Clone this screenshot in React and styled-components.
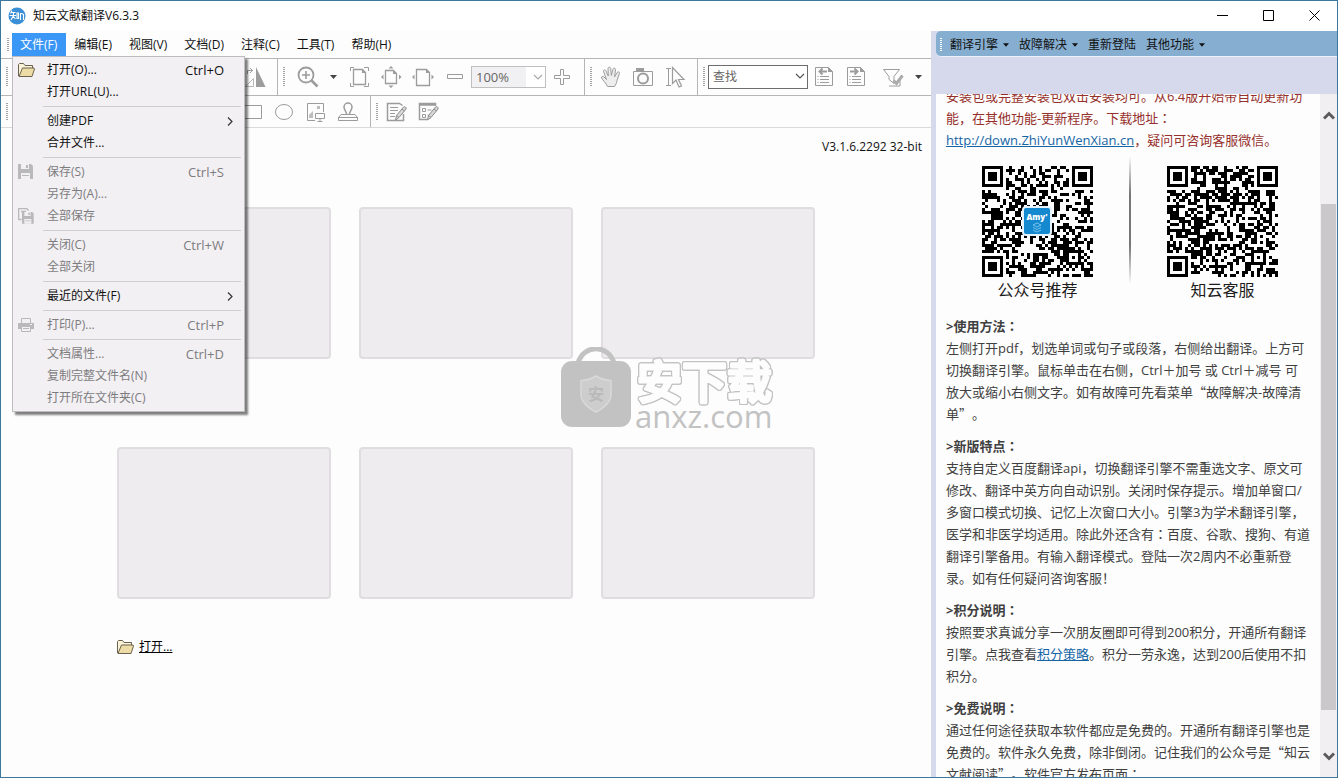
/* eslint-disable react/prop-types */
import { Fragment } from 'react';
import styled, { createGlobalStyle, css } from 'styled-components';

const GlobalStyles = createGlobalStyle`
  * {
    box-sizing: border-box;
    margin: 0;
    padding: 0;
  }

  body {
    font-family: 'Open Sans', 'Noto Sans CJK SC', sans-serif;
    font-size: 12px;
    line-height: 16px;
    color: #111;
    background: #fff;
    overflow: hidden;
  }

  button,
  select {
    font: inherit;
    color: inherit;
    border: none;
    background: none;
  }
`;

/* ---------- window ---------- */

const Window = styled.div`
  display: flex;
  flex-direction: column;
  height: 100vh;
  overflow: hidden;
  border: 1px solid #3b789c;
  background: #fdfdfd;
`;

const TitleBar = styled.header`
  display: flex;
  align-items: center;
  height: 30px;
  padding-left: 7px;
  background: #fff;
`;

const Title = styled.h1`
  flex: 1;
  margin-left: 7px;
  font-size: 12px;
  font-weight: 400;
`;

const WindowButton = styled.button`
  display: grid;
  place-items: center;
  width: 46px;
  height: 30px;
  padding-bottom: 1px;
`;

const Body = styled.div`
  display: flex;
  flex: 1;
  min-height: 0;
`;

const Reader = styled.main`
  position: relative;
  flex: 1;
  min-width: 0;
`;

/* ---------- menu bar ---------- */

const Grip = styled.span`
  flex: none;
  width: 2px;
  height: ${({ $height = 20 }) => $height}px;
  background: repeating-linear-gradient(
    ${({ $color = '#a3a3a3' }) => $color} 0 1px,
    transparent 1px 2px
  );
`;

const MenuBar = styled.nav`
  display: flex;
  align-items: center;
  height: 28px;
  padding-left: 6px;
  border-bottom: 1px solid #b5b5b5;
`;

const MenuTitle = styled.button`
  height: 24px;
  padding: 0 9px 0 8px;
  white-space: nowrap;

  &:first-of-type {
    margin-left: 3px;
  }

  ${({ $open }) =>
    $open &&
    css`
      color: #fff;
      background: #3b97f5;
    `}
`;

const Dropdown = styled.div`
  position: absolute;
  z-index: 2;
  top: 25px;
  left: 11px;
  width: 233px;
  padding: 2px 3px 2px 0;
  border: 1px solid #bdbcbf;
  background: #f2f0f3;
  box-shadow: 3px 3px 2px rgba(0, 0, 0, 0.5);
`;

const MenuItem = styled.button`
  display: flex;
  align-items: center;
  width: 100%;
  height: 22px;
  padding-right: 17px;
  text-align: left;

  &:disabled {
    color: #7d7c7e;
  }
`;

const MenuIcon = styled.span`
  display: grid;
  place-items: center;
  width: 26px;
  margin-right: 8px;
`;

const MenuLabel = styled.span`
  flex: 1;
`;

const Shortcut = styled.span`
  font-size: 13px;
`;

const MenuArrow = styled.svg`
  margin-right: -9px;
`;

const MenuRule = styled.hr`
  height: 1px;
  margin: 3px 0 3px 30px;
  border: none;
  background: #cfcdd0;
`;

/* ---------- toolbars ---------- */

const ToolBar = styled.div`
  display: flex;
  height: ${({ $height }) => $height}px;
  border-bottom: 1px solid ${({ $line = '#b5b5b5' }) => $line};
`;

const ToolGroup = styled.div`
  display: flex;
  flex: none;
  align-items: center;
  min-width: ${({ $min = 0 }) => $min}px;
  padding-left: 5px;
  padding-right: ${({ $last }) => ($last ? 0 : 6)}px;
  border-right: ${({ $last }) => ($last ? 'none' : '1px solid #b5b5b5')};
`;

const Tools = styled.div`
  display: flex;
  flex: 1;
  align-items: center;
  justify-content: ${({ $end }) => ($end ? 'flex-end' : 'flex-start')};
  margin-left: ${({ $gap = 3 }) => $gap}px;
`;

const ToolButton = styled.button`
  display: grid;
  place-items: center;
  width: ${({ $narrow }) => ($narrow ? 19 : 32)}px;
  height: 24px;
`;

const Spacer = styled.span`
  width: 5px;
`;

const SelectBox = styled.label`
  position: relative;
  display: block;

  svg {
    position: absolute;
    top: 8px;
    right: 3px;
    pointer-events: none;
  }
`;

const Select = styled.select`
  display: block;
  width: ${({ $strong }) => ($strong ? 100 : 75)}px;
  height: ${({ $strong }) => ($strong ? 24 : 22)}px;
  padding-left: 4px;
  appearance: none;
  border-radius: 0;
  color: #666;
  font-size: ${({ $strong }) => ($strong ? 12 : 13)}px;
  border: 1px solid ${({ $strong }) => ($strong ? '#6d6d6d' : '#bfbfbf')};
  background: ${({ $strong }) =>
    $strong ? '#fff' : 'linear-gradient(to right, #f1f0f2 54px, #fff 54px)'};
`;

const Icon = styled.svg`
  display: block;
  width: 22px;
  height: 22px;
  fill: none;
  stroke: #9c9c9c;
`;

/* ---------- start page ---------- */

const StartPage = styled.section`
  display: flex;
  flex-direction: column;
  align-items: center;
`;

const Version = styled.p`
  align-self: flex-end;
  padding: 11px 9px 0 0;
  margin-bottom: 52px;
`;

const RecentFiles = styled.div`
  display: grid;
  grid-template-columns: repeat(3, 214px);
  grid-auto-rows: 152px;
  gap: 88px 28px;
`;

const RecentFile = styled.div`
  border: 2px solid #dfdde0;
  border-radius: 4px;
  background: #eeecef;
`;

const OpenRow = styled.div`
  display: flex;
  align-items: center;
  gap: 5px;
  width: 698px;
  margin-top: 40px;
`;

const OpenLink = styled.a`
  color: #000;
`;

const Watermark = styled.div`
  position: absolute;
  z-index: 1;
  top: 316px;
  left: 559px;
  display: flex;
  gap: 3px;
  pointer-events: none;
`;

const WatermarkText = styled.div`
  padding-top: 9px;
  color: #c2c2c2;
  font-size: 31px;
  font-weight: 500;
  line-height: 24px;
`;

const WatermarkName = styled.svg`
  display: block;
  filter: drop-shadow(1px 0 #c2c2c2) drop-shadow(-1px 0 #c2c2c2)
    drop-shadow(0 1px #c2c2c2) drop-shadow(0 -1px #c2c2c2);
`;

/* ---------- translation panel ---------- */

const Panel = styled.aside`
  display: flex;
  flex: none;
  flex-direction: column;
  width: 406px;
  padding-left: 5px;
  background: #d6d9ec;
`;

const PanelBar = styled.nav`
  display: flex;
  flex: none;
  align-items: center;
  height: 26px;
  margin-bottom: 37px;
  padding: 3px 0 0 4px;
  border-bottom: 1px solid #e9f1fa;
  border-radius: 5px 0 0 5px;
  background: #86aed0;
`;

const PanelButtons = styled.div`
  display: flex;
  margin-left: 3px;
`;

const PanelButton = styled.button`
  display: flex;
  align-items: center;
  gap: 5px;
  height: 22px;
  padding: 0 5px;
`;

const PanelBody = styled.div`
  display: flex;
  flex: 1;
  min-height: 0;
  background: #fdfdfd;
`;

const Scroller = styled.div`
  flex: 1;
  overflow: hidden;
`;

const Article = styled.article`
  margin-top: -9px;
  padding: 0 9px 0 10px;
  color: #404040;
  font-size: 13px;
  line-height: 22px;
  text-spacing-trim: space-all;

  a {
    color: #1565a5;
  }
`;

const Notice = styled.p`
  color: #96302c;
`;

const Heading = styled.h2`
  margin-top: 10px;
  font-size: 13px;
  font-weight: 700;
`;

// full-width quotation marks
const Quote = styled.span`
  font-family: 'Noto Sans CJK SC', sans-serif;
`;

// colon that sits in the middle of its cell
const Colon = styled.span`
  font-family: 'Noto Sans CJK JP', sans-serif;
`;

const Codes = styled.div`
  display: flex;
  gap: 36px;
  height: 154px;
  padding-left: 36px;
`;

const Code = styled.figure`
  padding-top: 15px;

  svg {
    display: block;
  }
`;

const CodeCaption = styled.figcaption`
  width: 111px;
  font-size: 16px;
  line-height: 26px;
  text-align: center;
  color: #1c1c1c;
`;

const CodeDivider = styled.div`
  width: 2px;
  height: 128px;
  margin-top: 5px;
  background: linear-gradient(transparent, #777 30%, #777 70%, transparent);
`;

const ScrollBar = styled.div`
  display: flex;
  flex-direction: column;
  width: 17px;
  background: #f1eff2;
`;

const ScrollButton = styled.button`
  display: grid;
  place-items: center;
  height: 42px;
`;

const Track = styled.div`
  display: flex;
  flex: 1;
  flex-direction: column;
  padding: 0 1px;
`;

const TrackGap = styled.div`
  flex: ${({ $grow }) => $grow};
`;

const Thumb = styled.div`
  flex: 506;
  background: #cbc8cc;
`;

/* ---------- icons ---------- */

const Caret = ({ size = 7, color = '#444' }) => (
  <svg width={size} height="4" viewBox="0 0 7 4" aria-hidden="true">
    <path d="M0 0h7L3.5 4z" fill={color} />
  </svg>
);

const Chevron = ({ color = '#555' }) => (
  <svg width="10" height="7" viewBox="0 0 10 7" fill="none" aria-hidden="true">
    <path d="M1 1l4 4 4-4" stroke={color} strokeWidth="1.2" />
  </svg>
);

const FolderIcon = () => (
  <svg width="17" height="14" viewBox="0 0 17 14" aria-hidden="true">
    <path
      d="M.5 13V1.5l1-1h4l1.500 2h7.500V5"
      fill="#fbf3d8"
      stroke="#6b6150"
    />
    <path d="M1 13.500L4.500 5H16l.5 1-2.500 7.500z" fill="#eddca6" stroke="#6b6150" />
  </svg>
);

const DiskIcon = ({ all }) => (
  <svg width="16" height="16" viewBox="0 0 16 16" aria-hidden="true">
    {all && (
      <path
        d="M3.500 11.500H.5V.5h8l2 2M3 3.500h5"
        fill="none"
        stroke="#b9b8ba"
        strokeWidth="1.500"
      />
    )}
    <g transform={all ? 'translate(4 4) scale(.78)' : undefined}>
      <path d="M0 0h13l2 2v13H0z" fill="#b9b8ba" />
      <path d="M3 0h8v5H3zM3 9h9v6H3z" fill="#f2f0f3" />
      <path d="M8 1h2v3H8zM4 11h7v1H4z" fill="#b9b8ba" />
    </g>
  </svg>
);

const PrinterIcon = () => (
  <svg width="16" height="14" viewBox="0 0 16 14" fill="none" aria-hidden="true">
    <path d="M3.500 5V.5h9V5" stroke="#b9b8ba" />
    <path d="M0 5h16v6H0z" fill="#b9b8ba" />
    <path d="M3.500 8.500h9v5h-9z" fill="#f2f0f3" stroke="#b9b8ba" />
    <path d="M5 10.500h6" stroke="#b9b8ba" />
    <path d="M12 6.500h2" stroke="#f2f0f3" />
  </svg>
);

const menuIcons = {
  folder: <FolderIcon />,
  disk: <DiskIcon />,
  disks: <DiskIcon all />,
  printer: <PrinterIcon />,
};

const pencil = (
  <path
    d="M9.500 19l1-4.500 7-8.500c1-1 3.500.5 2.500 2l-7 8.500zM10.500 14.500l2.500 2M16 8l2.500 2"
    fill="#d8d8d8"
    stroke="#8c8c8c"
  />
);

const listLines = (
  <path d="M4.500 10.500h1M7 10.500h9M4.500 13.500h1M7 13.500h9M4.500 16.500h1M7 16.500h9" />
);

const toolIcons = {
  flip: (
    <>
      <path d="M12 1v20h9.500z" fill="#9c9c9c" stroke="none" />
      <path d="M9.500 12.500v8h-8z" stroke="#b8b8b8" />
      <path d="M3.500 8V4.500h5M6 2l2.500 2.500L6 7" />
    </>
  ),
  zoomIn: (
    <>
      <circle cx="9" cy="9" r="7.500" strokeWidth="1.800" />
      <path d="M9 5v8M5 9h8" strokeWidth="1.600" />
      <path d="M14.500 14.500l6 6" strokeWidth="2.600" />
    </>
  ),
  actualSize: (
    <>
      <path d="M2.500 5V1.500H6M16 1.500h4.500V5M20.500 17v3.500H16M6 20.500H2.500V17" />
      <path d="M5.500 3.500h9l3 3v12h-12z" strokeWidth="1.300" />
      <path d="M14 3v4h4z" fill="#9c9c9c" stroke="none" />
    </>
  ),
  fitPage: (
    <>
      <path d="M5.500 4.500h8l3 3v10h-11z" strokeWidth="1.300" />
      <path
        d="M13 4v4h4zM11 0l2.500 2.500h-5zM11 22l2.500-2.500h-5zM1 11l2.500-2.500v5zM21.500 11L19 8.500v5z"
        fill="#9c9c9c"
        stroke="none"
      />
    </>
  ),
  fitWidth: (
    <>
      <path d="M4.500 3.500h10l3 3v13h-13z" strokeWidth="1.300" />
      <path
        d="M14 3v4h4zM0 11l2.500-2.500v5zM22 11l-2.500-2.500v5z"
        fill="#9c9c9c"
        stroke="none"
      />
    </>
  ),
  minus: <path d="M3.500 8.500h15v4h-15z" />,
  plus: <path d="M9.500 3.500h3v6h6v3h-6v6h-3v-6h-6v-3h6z" />,
  hand: (
    <path
      d="M7.500 20.500C6 17 3 14.500 1.500 12c-.5-1.500 1.500-2 2.500-1l2.500 2.500L3.500 5.500c-.4-1.800 1.800-2.300 2.500-.5l2.300 5L8 2.500c0-1.800 2.500-1.800 2.700 0l.6 7 1.700-6.300c.5-1.700 2.700-1.200 2.500.6l-.9 7 2.600-4.300c1-1.500 2.800-.5 2.200 1L17 14.500c-.5 2.500-1 4-2.500 6z"
      fill="#ededed"
    />
  ),
  camera: (
    <>
      <path d="M1.500 5.500h19v14h-19z" />
      <path d="M4 2h8v4H4z" fill="#9c9c9c" stroke="none" />
      <circle cx="11" cy="12.500" r="5" strokeWidth="2" />
    </>
  ),
  select: (
    <>
      <path d="M2 2.500h5M4.500 2.500v17M2 19.500h5" />
      <path d="M8.500 1.500v16l3.500-3.500 3 7 2.500-1-3-6.500h5.500z" strokeWidth="1.200" />
    </>
  ),
  prev: (
    <>
      <path d="M2.500 1.500h13l4 4v14h-17z" />
      <path d="M15 1v5h5z" fill="#9c9c9c" stroke="none" />
      <path d="M7 5.500h7M9.500 2.500l-3 3 3 3" strokeWidth="2" />
      {listLines}
    </>
  ),
  next: (
    <>
      <path d="M2.500 1.500h13l4 4v14h-17z" />
      <path d="M15 1v5h5z" fill="#9c9c9c" stroke="none" />
      <path d="M5 5.500h7M9.500 2.500l3 3-3 3" strokeWidth="2" />
      {listLines}
    </>
  ),
  filter: (
    <>
      <path d="M1.500 3.500h16l-5.500 7v7l-5-4v-3zM7 20h11v-6" />
      <path d="M11.500 14.500l3 3 6-8" strokeWidth="3" stroke="#aaa" />
    </>
  ),
  rect: <path d="M.5 4.500h20v13H.5z" />,
  oval: <ellipse cx="11" cy="11" rx="8.500" ry="7.500" />,
  image: (
    <>
      <path d="M10 19.500H2.500v-17h16V11" />
      <path d="M4 17v-3l4-4v7zM12 5h3v3h-3z" fill="#bdbdbd" stroke="none" />
      <path d="M10.500 12.500h9v5h-9zM15 18v2.500M12.500 20.500h5" />
    </>
  ),
  stamp: (
    <>
      <path d="M9.500 13c0-2.500-2.500-4-2.500-7a4 4 0 018 0c0 3-2.500 4.500-2.500 7" strokeWidth="1.500" />
      <path d="M4 13.500h14l2.500 3h-19zM1.500 16.500h19v3h-19z" />
    </>
  ),
  note: (
    <>
      <path d="M17.500 13v6.500h-16v-17h12l3 2" strokeWidth="1.500" />
      <path d="M4 6.500h8M4 9.500h8M4 12.500h5M4 15.500h5" />
      {pencil}
    </>
  ),
  form: (
    <>
      <path d="M9 18.500H1.500v-16h16V5M2 4h16" strokeWidth="1.500" />
      <path d="M4.500 7.500h3v3h-3zM4.500 13.500h3v3h-3zM9.500 9h4M9.500 14h1" />
      {pencil}
    </>
  ),
};

function Tool({ name, label }) {
  return (
    <ToolButton aria-label={label}>
      <Icon viewBox="0 0 22 22">{toolIcons[name]}</Icon>
    </ToolButton>
  );
}

function CaretTool({ label }) {
  return (
    <ToolButton $narrow aria-label={label}>
      <Caret />
    </ToolButton>
  );
}

const AppLogo = () => (
  <svg width="18" height="18" viewBox="0 0 18 18" aria-hidden="true">
    <circle cx="9" cy="9" r="8.500" fill="#3a8fd6" />
    <path
      d="M4 3.500L2.500 6.500M3.500 5.500h4M1.500 8.500h6.500M5.500 5.500v3L3 13M5.500 9.500l2 2.500M9 6v5.500h1.500V6zM12.500 13V6.500h1.500l1.500 1V13"
      fill="none"
      stroke="#fff"
      strokeWidth="1.100"
    />
  </svg>
);

/* ---------- QR codes ---------- */

const QR_SIZE = 37;

function buildCode(seed) {
  let state = seed;
  let path = '';

  // square rings: 7x7 finders and the single 5x5 alignment mark
  const marks = [
    [3, 3, 3],
    [33, 3, 3],
    [3, 33, 3],
    [30, 30, 2],
  ];

  for (let y = 0; y < QR_SIZE; y++) {
    for (let x = 0; x < QR_SIZE; x++) {
      state = (state * 48271) % 2147483647;
      let dark = state / 2147483647 > 0.47;

      marks.forEach(([cx, cy, radius]) => {
        const ring = Math.max(Math.abs(x - cx), Math.abs(y - cy));
        if (radius === 3 && ring <= 4) dark = ring !== 4 && ring !== 2;
        if (radius === 2 && ring <= 2) dark = ring !== 1;
      });

      if (dark) path += `M${x} ${y}h1v1h-1z`;
    }
  }
  return path;
}

function QrCode({ seed, label, badge }) {
  return (
    <Code>
      <svg width="111" height="111" viewBox="0 0 111 111" role="img" aria-label={label}>
        <path
          d={buildCode(seed)}
          transform="scale(3)"
          fill="#000"
          shapeRendering="crispEdges"
        />
        {badge && (
          <>
            <rect x="41" y="41" width="28" height="28" rx="3" fill="#1489cf" stroke="#e4f3fb" strokeWidth="2" />
            <text x="55" y="54" textAnchor="middle" fontSize="8" fontWeight="800" fill="#fff">
              Amy&apos;
            </text>
            <path
              d="M51 59l4-2 4 2-4 2zM51 61.500l4 2 4-2M51 64l4 2 4-2"
              fill="none"
              stroke="#8fd0f2"
              strokeWidth=".8"
            />
          </>
        )}
      </svg>
      <CodeCaption>{label}</CodeCaption>
    </Code>
  );
}

/* ---------- data ---------- */

const menuTitles = [
  '文件(F)',
  '编辑(E)',
  '视图(V)',
  '文档(D)',
  '注释(C)',
  '工具(T)',
  '帮助(H)',
];

const fileMenu = [
  [
    { label: '打开(O)...', keys: 'Ctrl+O', icon: 'folder' },
    { label: '打开URL(U)...' },
  ],
  [{ label: '创建PDF', sub: true }, { label: '合并文件...' }],
  [
    { label: '保存(S)', keys: 'Ctrl+S', icon: 'disk', disabled: true },
    { label: '另存为(A)...', disabled: true },
    { label: '全部保存', icon: 'disks', disabled: true },
  ],
  [
    { label: '关闭(C)', keys: 'Ctrl+W', disabled: true },
    { label: '全部关闭', disabled: true },
  ],
  [{ label: '最近的文件(F)', sub: true }],
  [{ label: '打印(P)...', keys: 'Ctrl+P', icon: 'printer', disabled: true }],
  [
    { label: '文档属性...', keys: 'Ctrl+D', disabled: true },
    { label: '复制完整文件名(N)', disabled: true },
    { label: '打开所在文件夹(C)', disabled: true },
  ],
];

const panelMenus = [
  { label: '翻译引擎', caret: true },
  { label: '故障解决', caret: true },
  { label: '重新登陆' },
  { label: '其他功能', caret: true },
];

/* ---------- sections ---------- */

function FileMenu() {
  return (
    <Dropdown role="menu">
      {fileMenu.map((section, i) => (
        <Fragment key={section[0].label}>
          {i > 0 && <MenuRule />}
          {section.map(({ label, keys, icon, sub, disabled }) => (
            <MenuItem key={label} role="menuitem" disabled={disabled}>
              <MenuIcon>{menuIcons[icon]}</MenuIcon>
              <MenuLabel>{label}</MenuLabel>
              {keys && <Shortcut>{keys}</Shortcut>}
              {sub && (
                <MenuArrow width="6" height="9" viewBox="0 0 6 9" fill="none">
                  <path d="M1 .5l4 4-4 4" stroke="#333" strokeWidth="1.200" />
                </MenuArrow>
              )}
            </MenuItem>
          ))}
        </Fragment>
      ))}
    </Dropdown>
  );
}

function ToolBars() {
  return (
    <>
      <ToolBar $height={37}>
        <ToolGroup $min={277}>
          <Grip />
          <Tools $end>
            <Tool name="flip" label="翻转" />
          </Tools>
        </ToolGroup>
        <ToolGroup>
          <Grip />
          <Tools $gap={7}>
            <Tool name="zoomIn" label="放大工具" />
            <CaretTool label="缩放选项" />
            <Tool name="actualSize" label="实际大小" />
            <Tool name="fitPage" label="适合页面" />
            <Tool name="fitWidth" label="适合宽度" />
            <Tool name="minus" label="缩小" />
            <SelectBox>
              <Select aria-label="缩放比例">
                <option>100%</option>
              </Select>
              <Chevron color="#aaa" />
            </SelectBox>
            <Tool name="plus" label="放大" />
          </Tools>
        </ToolGroup>
        <ToolGroup>
          <Grip />
          <Tools>
            <Tool name="hand" label="手形" />
            <Tool name="camera" label="快照" />
            <Tool name="select" label="选择" />
          </Tools>
        </ToolGroup>
        <ToolGroup $last>
          <Grip />
          <Tools>
            <SelectBox>
              <Select $strong aria-label="查找">
                <option>查找</option>
              </Select>
              <Chevron />
            </SelectBox>
            <Tool name="prev" label="上一个" />
            <Tool name="next" label="下一个" />
            <Spacer />
            <Tool name="filter" label="筛选" />
            <CaretTool label="筛选选项" />
          </Tools>
        </ToolGroup>
      </ToolBar>
      <ToolBar $height={32} $line="#d9d9d9">
        <ToolGroup $min={370}>
          <Grip $height={18} />
          <Tools $end>
            <Tool name="rect" label="矩形" />
            <Tool name="oval" label="椭圆" />
            <Tool name="image" label="图像" />
            <Tool name="stamp" label="图章" />
          </Tools>
        </ToolGroup>
        <ToolGroup $last>
          <Grip $height={18} />
          <Tools>
            <Tool name="note" label="编辑内容" />
            <Tool name="form" label="编辑表单" />
          </Tools>
        </ToolGroup>
      </ToolBar>
    </>
  );
}

function SiteWatermark() {
  return (
    <Watermark>
      <svg width="72" height="80" viewBox="0 0 72 80" aria-hidden="true">
        <path d="M18 16C24-3 48-3 54 16" fill="none" stroke="#c2c2c2" strokeWidth="5" />
        <rect x="1" y="14" width="70" height="66" rx="11" fill="#c2c2c2" />
        <path
          d="M36 29c5 3 10 4.500 15 4.500V47c0 8-7 14-15 18-8-4-15-10-15-18V33.500c5 0 10-1.500 15-4.500z"
          fill="#cdcdcd"
          stroke="#d9d9d9"
          strokeWidth="1.500"
        />
        <text x="36" y="53" textAnchor="middle" fontSize="16" fontWeight="700" fill="#b9b9b9">
          安
        </text>
      </svg>
      <WatermarkText>
        <WatermarkName width="144" height="48" viewBox="0 0 144 48" overflow="visible">
          <text
            x="2"
            y="43"
            fontSize="45"
            fontWeight="500"
            fill="#fdfdfd"
            stroke="#fdfdfd"
            strokeWidth="3"
            strokeLinejoin="round"
          >
            安下载
          </text>
        </WatermarkName>
        anxz.com
      </WatermarkText>
    </Watermark>
  );
}

function TranslationPanel() {
  return (
    <Panel>
      <PanelBar>
        <Grip $height={14} $color="#fff" />
        <PanelButtons>
          {panelMenus.map(({ label, caret }) => (
            <PanelButton key={label}>
              {label}
              {caret && <Caret size={6} color="#111" />}
            </PanelButton>
          ))}
        </PanelButtons>
      </PanelBar>
      <PanelBody>
        <Scroller>
          <Article>
            <Notice>
              安装包或完整安装包双击安装均可。从6.4版开始带自动更新功能，在其他功能-更新程序。下载地址
              <Colon>：</Colon>
              <br />
              <a href="http://down.ZhiYunWenXian.cn">http://down.ZhiYunWenXian.cn</a>
              ，疑问可咨询客服微信。
            </Notice>
            <Codes>
              <QrCode seed={20317} label="公众号推荐" badge />
              <CodeDivider />
              <QrCode seed={77041} label="知云客服" />
            </Codes>
            <Heading>
              &gt;使用方法<Colon>：</Colon>
            </Heading>
            <p>
              左侧打开pdf，划选单词或句子或段落，右侧给出翻译。上方可切换翻译引擎。鼠标单击在右侧，Ctrl＋加号
              或 Ctrl＋减号 可
              <br />
              放大或缩小右侧文字。如有故障可先看菜单<Quote>“</Quote>
              故障解决-故障清单<Quote>”</Quote>。
            </p>
            <Heading>
              &gt;新版特点<Colon>：</Colon>
            </Heading>
            <p>
              支持自定义百度翻译api，切换翻译引擎不需重选文字、原文可修改、翻译中英方向自动识别。关闭时保存提示。增加单窗口/多窗口模式切换、记忆上次窗口大小。引擎3为学术翻译引擎，医学和非医学均适用。除此外还含有
              <Colon>：</Colon>
              百度、谷歌、搜狗、有道翻译引擎备用。有输入翻译模式。登陆一次2周内不必重新登录。如有任何疑问咨询客服！
            </p>
            <Heading>
              &gt;积分说明<Colon>：</Colon>
            </Heading>
            <p>
              按照要求真诚分享一次朋友圈即可得到200积分，开通所有翻译引擎。点我查看
              <a href="#points">积分策略</a>
              。积分一劳永逸，达到200后使用不扣积分。
            </p>
            <Heading>
              &gt;免费说明<Colon>：</Colon>
            </Heading>
            <p>
              通过任何途径获取本软件都应是免费的。开通所有翻译引擎也是免费的。软件永久免费，除非倒闭。记住我们的公众号是
              <Quote>“</Quote>知云文献阅读<Quote>”</Quote>。软件官方发布页面
              <Colon>：</Colon>
            </p>
          </Article>
        </Scroller>
        <ScrollBar>
          <ScrollButton aria-label="向上滚动">
            <svg width="12" height="9" viewBox="0 0 12 9" fill="none">
              <path d="M1 7.500l5-5 5 5" stroke="#5a5a5a" strokeWidth="3" />
            </svg>
          </ScrollButton>
          <Track>
            <TrackGap $grow={68} />
            <Thumb />
            <TrackGap $grow={25} />
          </Track>
          <ScrollButton aria-label="向下滚动">
            <svg width="12" height="9" viewBox="0 0 12 9" fill="none">
              <path d="M1 1.500l5 5 5-5" stroke="#5a5a5a" strokeWidth="3" />
            </svg>
          </ScrollButton>
        </ScrollBar>
      </PanelBody>
    </Panel>
  );
}

function App() {
  return (
    <>
      <GlobalStyles />
      <Window>
        <TitleBar>
          <AppLogo />
          <Title>知云文献翻译V6.3.3</Title>
          <WindowButton aria-label="最小化">
            <svg width="11" height="11" viewBox="0 0 11 11">
              <path d="M0 5.500h11" stroke="#000" />
            </svg>
          </WindowButton>
          <WindowButton aria-label="最大化">
            <svg width="11" height="11" viewBox="0 0 11 11">
              <path d="M.5.5h10v10H.5z" fill="none" stroke="#000" />
            </svg>
          </WindowButton>
          <WindowButton aria-label="关闭">
            <svg width="11" height="11" viewBox="0 0 11 11">
              <path d="M.5.5l10 10M10.500.5l-10 10" stroke="#000" />
            </svg>
          </WindowButton>
        </TitleBar>
        <Body>
          <Reader>
            <MenuBar>
              <Grip $height={14} />
              {menuTitles.map((title, i) => (
                <MenuTitle key={title} $open={i === 0}>
                  {title}
                </MenuTitle>
              ))}
            </MenuBar>
            <FileMenu />
            <ToolBars />
            <StartPage>
              <Version>V3.1.6.2292 32-bit</Version>
              <RecentFiles>
                {[1, 2, 3, 4, 5, 6].map((slot) => (
                  <RecentFile key={slot} />
                ))}
              </RecentFiles>
              <OpenRow>
                <FolderIcon />
                <OpenLink href="#open">打开...</OpenLink>
              </OpenRow>
            </StartPage>
            <SiteWatermark />
          </Reader>
          <TranslationPanel />
        </Body>
      </Window>
    </>
  );
}

export default App;
